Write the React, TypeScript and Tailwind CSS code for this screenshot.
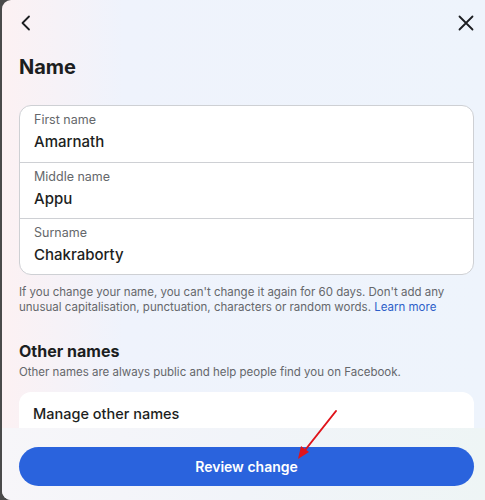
import React from "react";

export default function App() {
  const rows = [
    { label: "First name", value: "Amarnath" },
    { label: "Middle name", value: "Appu" },
    { label: "Surname", value: "Chakraborty" },
  ];
  return (
    <div className="w-[485px] h-[500px] bg-[#4a4a4a] flex" style={{ fontFamily: "Inter, 'Noto Sans', sans-serif" }}>
      <div className="relative ml-[2px] flex-1 h-full rounded-l-[9px] overflow-hidden flex flex-col bg-gradient-to-r from-[#fcf1f3] via-[#eff3fc] via-25% to-[#eef4fc]">
        <div className="h-[46px] flex items-center justify-between pl-[18px] pr-[11px] shrink-0">
          <svg width="12" height="16" viewBox="0 0 12 16" fill="none">
            <path d="M9 1.5L2.5 8L9 14.5" stroke="#1c1e21" strokeWidth="1.8" strokeLinecap="round" strokeLinejoin="round" />
          </svg>
          <svg width="16" height="16" viewBox="0 0 16 16" fill="none">
            <path d="M1.5 1.5L14.5 14.5M14.5 1.5L1.5 14.5" stroke="#1c1e21" strokeWidth="1.8" strokeLinecap="round" />
          </svg>
        </div>
        <div className="flex-1 overflow-hidden pl-[17px] pr-[11px]">
          <h1 className="mt-[9px] text-[20px] leading-[24px] font-bold text-[#1c1e21]">Name</h1>
          <div className="mt-[26px] bg-white rounded-[12px] border border-[#ced0d4] overflow-hidden">
            {rows.map((r, i) => (
              <div key={r.label} className={"h-[56px] px-[14px] pt-[6px] " + (i > 0 ? "border-t border-[#ced0d4]" : "")}>
                <div className="text-[12.5px] leading-[16px] text-[#65676b]">{r.label}</div>
                <div className="mt-[4px] text-[15px] leading-[20px] text-[#1c1e21] font-medium">{r.value}</div>
              </div>
            ))}
          </div>
          <p className="mt-[10px] text-[11.5px] leading-[15px] text-[#65676b]">
            If you change your name, you can't change it again for 60 days. Don't add any unusual capitalisation, punctuation, characters or random words.{" "}
            <span className="text-[#2d5fc9]">Learn more</span>
          </p>
          <h2 className="mt-[26px] text-[16px] leading-[20px] font-bold text-[#1c1e21]">Other names</h2>
          <p className="mt-[4px] text-[11.5px] leading-[15px] text-[#65676b]">Other names are always public and help people find you on Facebook.</p>
          <div className="mt-[12px] bg-white rounded-[12px] h-[60px] px-[14px] pt-[12px]">
            <div className="text-[14.5px] leading-[20px] text-[#1c1e21] font-medium">Manage other names</div>
          </div>
        </div>
        <div className="h-[72px] shrink-0 pl-[17px] pr-[11px] pt-[19px] bg-gradient-to-r from-[#f7f6f9] via-[#f1f4f9] to-[#eef5f5]">
          <button className="w-full h-[39px] rounded-full bg-[#2a63dd] text-white text-[14px] font-semibold">Review change</button>
        </div>
        <svg className="absolute left-[292px] top-[406px]" width="48" height="58" viewBox="0 0 48 58" fill="none">
          <path d="M42 5L8 48" stroke="#e0141b" strokeWidth="2" strokeLinecap="round" />
          <path d="M4 53L7 40L15 46Z" fill="#e0141b" />
        </svg>
      </div>
    </div>
  );
}
